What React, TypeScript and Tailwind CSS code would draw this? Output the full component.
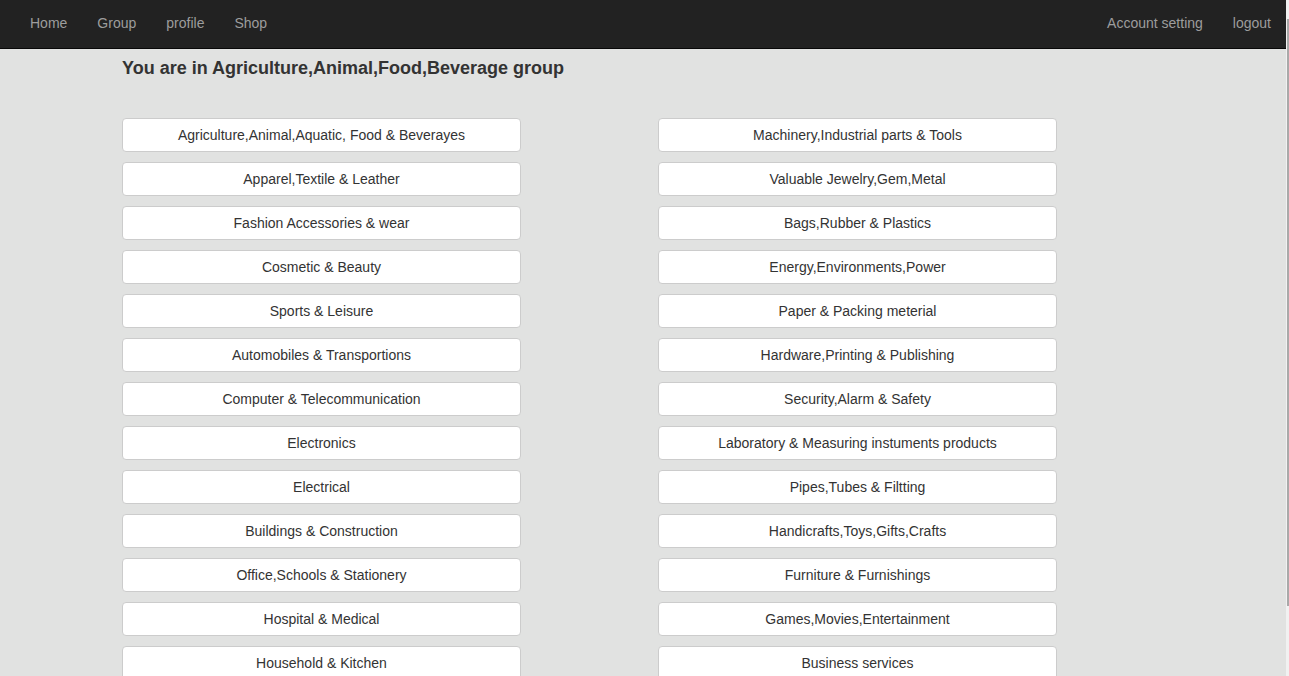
import React from "react";

const left = [
  "Agriculture,Animal,Aquatic, Food & Beverayes",
  "Apparel,Textile & Leather",
  "Fashion Accessories & wear",
  "Cosmetic & Beauty",
  "Sports & Leisure",
  "Automobiles & Transportions",
  "Computer & Telecommunication",
  "Electronics",
  "Electrical",
  "Buildings & Construction",
  "Office,Schools & Stationery",
  "Hospital & Medical",
  "Household & Kitchen",
];

const right = [
  "Machinery,Industrial parts & Tools",
  "Valuable Jewelry,Gem,Metal",
  "Bags,Rubber & Plastics",
  "Energy,Environments,Power",
  "Paper & Packing meterial",
  "Hardware,Printing & Publishing",
  "Security,Alarm & Safety",
  "Laboratory & Measuring instuments products",
  "Pipes,Tubes & Filtting",
  "Handicrafts,Toys,Gifts,Crafts",
  "Furniture & Furnishings",
  "Games,Movies,Entertainment",
  "Business services",
];

function Btn({ label }: { label: string }) {
  return (
    <div className="h-[34px] w-[399px] rounded-[4px] border border-[#cccccc] bg-white flex items-center justify-center text-[14px] text-[#333333] shrink-0">
      {label}
    </div>
  );
}

export default function App() {
  return (
    <div
      className="flex h-[676px] w-full overflow-hidden bg-[#e1e2e1]"
      style={{ fontFamily: '"Liberation Sans", Arial, sans-serif' }}
    >
      <div className="flex-1 flex flex-col min-w-0">
        <nav className="h-[49px] shrink-0 bg-[#222222] border-b border-[#080808] flex items-center justify-between text-[14px] text-[#9d9d9d]">
          <div className="flex items-center pl-[15px]">
            {["Home", "Group", "profile", "Shop"].map((t) => (
              <span key={t} className="px-[15px] leading-[20px] pb-[2px]">
                {t}
              </span>
            ))}
          </div>
          <div className="flex items-center">
            {["Account setting", "logout"].map((t) => (
              <span key={t} className="px-[15px] leading-[20px] pb-[2px]">
                {t}
              </span>
            ))}
          </div>
        </nav>
        <div className="pl-[122px]">
          <h1 className="mt-[9px] text-[18px] font-bold leading-[20px] text-[#333333]">
            You are in Agriculture,Animal,Food,Beverage group
          </h1>
          <div className="mt-[40px] flex gap-[137px]">
            <div className="flex flex-col gap-[10px]">
              {left.map((l) => (
                <Btn key={l} label={l} />
              ))}
            </div>
            <div className="flex flex-col gap-[10px]">
              {right.map((l) => (
                <Btn key={l} label={l} />
              ))}
            </div>
          </div>
        </div>
      </div>
      <aside className="w-[3px] shrink-0 bg-[#f1f1f1] flex justify-end">
        <div className="mt-[19px] h-[587px] w-[2px] bg-[#a9a9a9]" />
      </aside>
    </div>
  );
}
